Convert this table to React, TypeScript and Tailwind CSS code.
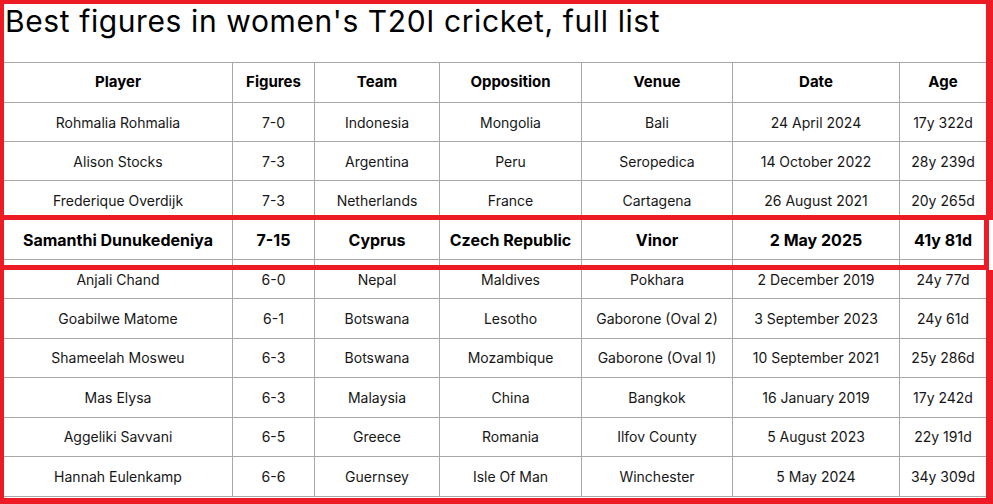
import React from "react";

const COLS = "grid grid-cols-[229px_82px_125px_142px_151px_167px_86px]";

type Row = string[];

const topRows: Row[] = [
  ["Rohmalia Rohmalia", "7-0", "Indonesia", "Mongolia", "Bali", "24 April 2024", "17y 322d"],
  ["Alison Stocks", "7-3", "Argentina", "Peru", "Seropedica", "14 October 2022", "28y 239d"],
  ["Frederique Overdijk", "7-3", "Netherlands", "France", "Cartagena", "26 August 2021", "20y 265d"],
];

const highlight: Row = ["Samanthi Dunukedeniya", "7-15", "Cyprus", "Czech Republic", "Vinor", "2 May 2025", "41y 81d"];

const bottomRows: Row[] = [
  ["Anjali Chand", "6-0", "Nepal", "Maldives", "Pokhara", "2 December 2019", "24y 77d"],
  ["Goabilwe Matome", "6-1", "Botswana", "Lesotho", "Gaborone (Oval 2)", "3 September 2023", "24y 61d"],
  ["Shameelah Mosweu", "6-3", "Botswana", "Mozambique", "Gaborone (Oval 1)", "10 September 2021", "25y 286d"],
  ["Mas Elysa", "6-3", "Malaysia", "China", "Bangkok", "16 January 2019", "17y 242d"],
  ["Aggeliki Savvani", "6-5", "Greece", "Romania", "Ilfov County", "5 August 2023", "22y 191d"],
  ["Hannah Eulenkamp", "6-6", "Guernsey", "Isle Of Man", "Winchester", "5 May 2024", "34y 309d"],
];

const header = ["Player", "Figures", "Team", "Opposition", "Venue", "Date", "Age"];

function TableRow({ cells, h, cls, extra = "" }: { cells: Row; h: string; cls: string; extra?: string }) {
  return (
    <div className={`${COLS} ${h} border-b border-[#a8a8a8] shrink-0 ${extra}`}>
      {cells.map((c, i) => (
        <div
          key={i}
          className={`flex items-center justify-center whitespace-nowrap ${i < 6 ? "border-r border-[#a8a8a8]" : ""} ${cls}`}
        >
          {c}
        </div>
      ))}
    </div>
  );
}

function Spacer({ h }: { h: string }) {
  return (
    <div className={`${COLS} ${h} shrink-0`}>
      {header.map((_, i) => (
        <div key={i} className={i < 6 ? "border-r border-[#a8a8a8]" : ""} />
      ))}
    </div>
  );
}

export default function App() {
  const body = "text-[14px] text-[#161616]";
  return (
    <div className="w-[993px] h-[504px] bg-white overflow-hidden flex flex-col" style={{ fontFamily: "Inter, 'Noto Sans', sans-serif" }}>
      {/* Box 1 */}
      <div className="h-[220px] shrink-0 border-t-4 border-l-4 border-r-[7px] border-b-[5px] border-[#ed1c24] overflow-hidden flex flex-col">
        <div className="h-[58px] shrink-0 pl-[1px] pt-[1px] text-[30px] leading-[32px] text-black tracking-[0.6px]">
          Best figures in women's T20I cricket, full list
        </div>
        <TableRow cells={header} h="h-[41px]" cls="text-[15px] font-bold text-black" extra="border-t" />
        {topRows.map((r, i) => (
          <TableRow key={i} cells={r} h="h-[39px]" cls={body} />
        ))}
      </div>
      {/* Box 2 */}
      <div className="h-[50px] w-[989px] shrink-0 border-l-4 border-r-[5px] border-b-[5px] border-[#ed1c24] overflow-hidden flex flex-col">
        <TableRow cells={highlight} h="h-[40px]" cls="text-[16px] font-bold text-black" />
        <Spacer h="h-[5px]" />
      </div>
      {/* Box 3 */}
      <div className="flex-1 border-l-4 border-r-[7px] border-b-[6px] border-[#ed1c24] overflow-hidden flex flex-col">
        <TableRow cells={bottomRows[0]} h="h-[39px]" cls={body} extra="-mt-[10px]" />
        {bottomRows.slice(1).map((r, i) => (
          <TableRow key={i} cells={r} h="h-[39.5px]" cls={body} />
        ))}
      </div>
    </div>
  );
}
